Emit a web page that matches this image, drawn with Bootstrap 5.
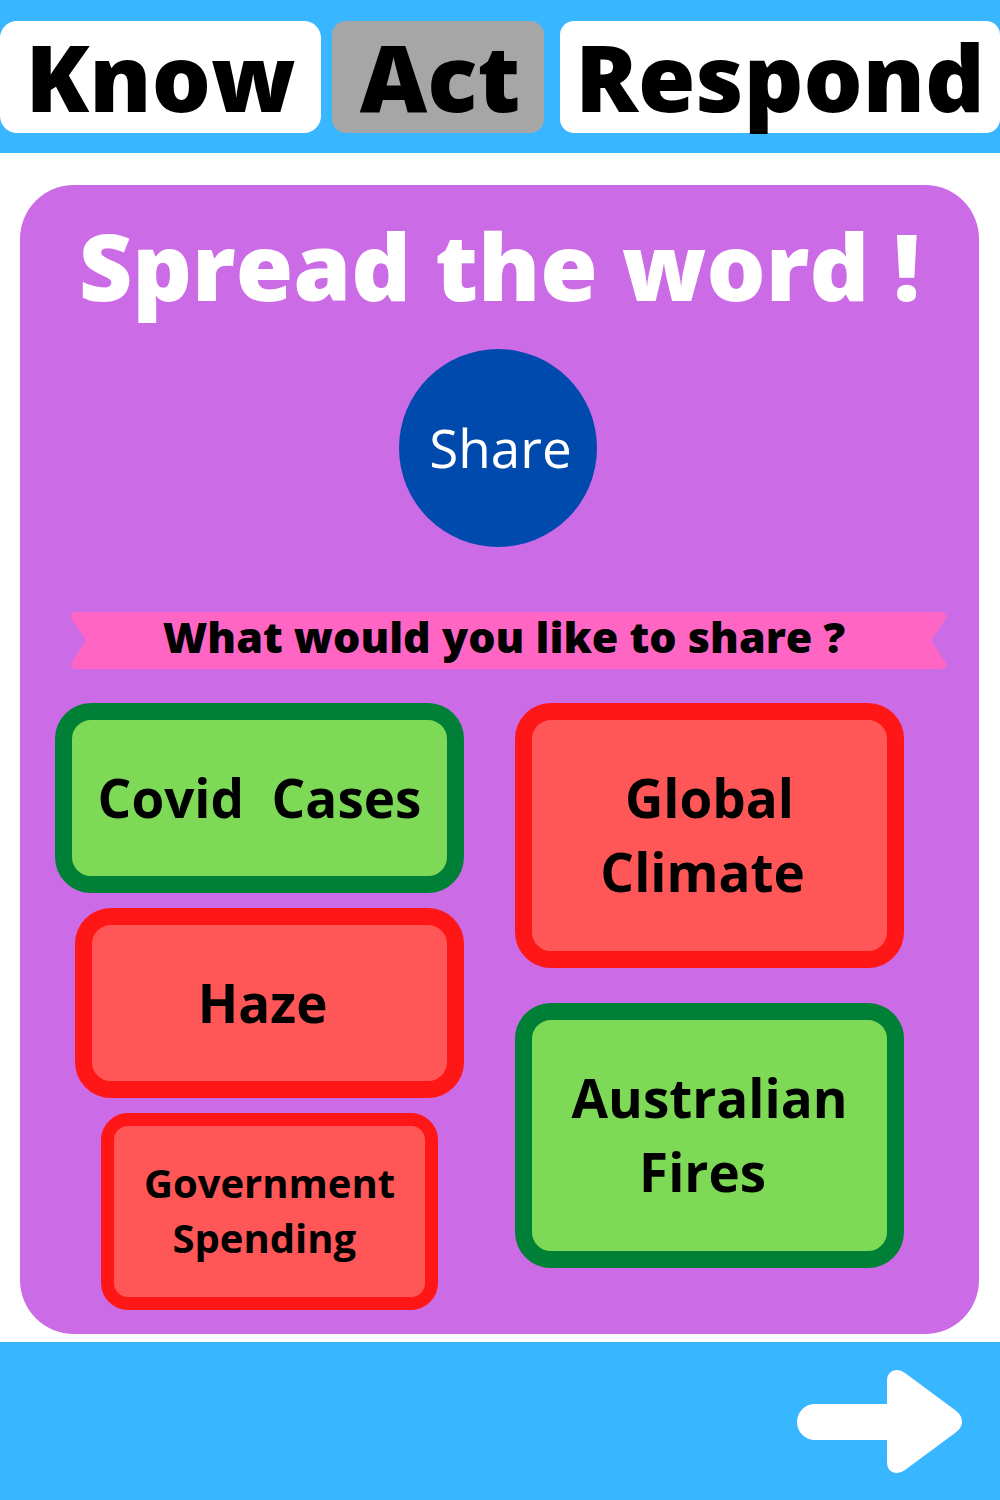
<!DOCTYPE html>
<html lang="en">
<head>
<meta charset="utf-8">
<meta name="viewport" content="width=device-width, initial-scale=1">
<title>Spread the word</title>
<link href="https://cdn.jsdelivr.net/npm/bootstrap@5.3.0/dist/css/bootstrap.min.css" rel="stylesheet">
<style>
  body { font-family: "Open Sans", "Noto Sans", sans-serif; color: #000; background: #fff; }
  .bar-blue { background: #38b6ff; }
  .top-bar { padding: 21px 0 20px; }
  .tab-link { height: 112px; border-radius: 14px; background: #fff; color: #000; font-size: 93px; font-weight: 800; line-height: 110px; text-align: center; text-decoration: none; }
  .tab-know { flex: 321 1 0; margin-right: 11px; border-radius: 17px; }
  .tab-act { flex: 208 1 0; margin-right: 16px; padding-left: 4px; background: #a6a6a6; }
  .tab-respond { flex: 440 1 0; }
  .panel { margin: 32px 21px 8px 20px; padding: 16px 0 24px; border-radius: 54px; background: #cb6ce6; }
  .panel-title { font-size: 93px; font-weight: 800; line-height: 128px; color: #fff; }
  .share-row { padding: 20px 4px 0 0; }
  .share-btn { width: 198px; height: 198px; padding: 0 0 0 6px; border: 0; border-radius: 50%; background: #004aad; color: #fff; font-size: 53px; line-height: 74px; }
  .ribbon { margin: 65px 32px 34px 50px; height: 57px; }
  .ribbon svg { width: 17px; height: 57px; fill: #ff66c4; }
  .ribbon-text { padding-right: 9px; background: #ff66c4; font-size: 43px; font-weight: 800; line-height: 50px; }
  .choices { padding: 0 75px 0 35px; gap: 51px; }
  .col-left { flex: 409 1 0; gap: 15px; }
  .col-right { flex: 389 1 0; gap: 35px; }
  .choice { border: 17px solid; border-radius: 36px; padding: 0; color: #000; font-size: 53px; font-weight: 700; line-height: 74px; }
  .choice-green { background: #7ed957; border-color: #008037; }
  .choice-red { background: #ff5757; border-color: #ff1616; }
  .choice-short { height: 190px; }
  .choice-tall { height: 265px; padding-bottom: 2px; }
  .choice-haze { margin-left: 20px; }
  .choice-small { height: 197px; margin: 0 26px 0 46px; padding-bottom: 4px; border-width: 13px; border-radius: 27px; font-size: 40px; line-height: 55px; }
  .bottom-bar { height: 158px; padding: 2px 38px 0; }
  .next-arrow { width: 165px; height: 104px; fill: #fff; }
</style>
</head>
<body>
<header class="bar-blue top-bar">
  <nav class="d-flex" aria-label="Sections">
    <a class="tab-link tab-know" href="#know">Know</a>
    <a class="tab-link tab-act" href="#act" aria-current="page">Act</a>
    <a class="tab-link tab-respond" href="#respond">Respond</a>
  </nav>
</header>

<main class="panel">
  <h1 class="panel-title text-center mb-0">Spread the word !</h1>
  <div class="share-row d-flex justify-content-center">
    <button class="share-btn" type="button">Share</button>
  </div>
  <div class="ribbon d-flex">
    <svg viewBox="0 0 17 57" aria-hidden="true"><path d="M17 0H6Q2 0 1 4Q1 7 3 9L16 28.500L3 48Q1 50 1 53Q2 57 6 57H17Z"/></svg>
    <h2 class="ribbon-text flex-grow-1 text-center mb-0">What would you like to share ?</h2>
    <svg viewBox="0 0 17 57" aria-hidden="true"><path d="M0 0H11Q15 0 16 4Q16 7 14 9L1 28.500L14 48Q16 50 16 53Q15 57 11 57H0Z"/></svg>
  </div>
  <div class="choices d-flex align-items-start">
    <div class="col-left d-flex flex-column">
      <button class="choice choice-green choice-short" type="button">Covid&nbsp; Cases</button>
      <button class="choice choice-red choice-short choice-haze" type="button">Haze&nbsp;</button>
      <button class="choice choice-red choice-small" type="button">Government<br>Spending&nbsp;</button>
    </div>
    <div class="col-right d-flex flex-column">
      <button class="choice choice-red choice-tall" type="button">Global<br>Climate&nbsp;</button>
      <button class="choice choice-green choice-tall" type="button">Australian<br>Fires&nbsp;</button>
    </div>
  </div>
</main>

<footer class="bar-blue bottom-bar d-flex justify-content-end align-items-center">
  <a class="d-flex" href="#next" aria-label="Next">
    <svg class="next-arrow" viewBox="0 0 165 104" aria-hidden="true"><path d="M18 34H90V11C90 4 94 0 100 0Q104 0 108 3L158 40Q165 45 165 52Q165 58 158 63L108 100Q104 103 100 103C94 103 90 99 90 92V70H18A18 18 0 0 1 18 34Z"/></svg>
  </a>
</footer>
<script src="https://cdn.jsdelivr.net/npm/bootstrap@5.3.0/dist/js/bootstrap.bundle.min.js"></script>
</body>
</html>
